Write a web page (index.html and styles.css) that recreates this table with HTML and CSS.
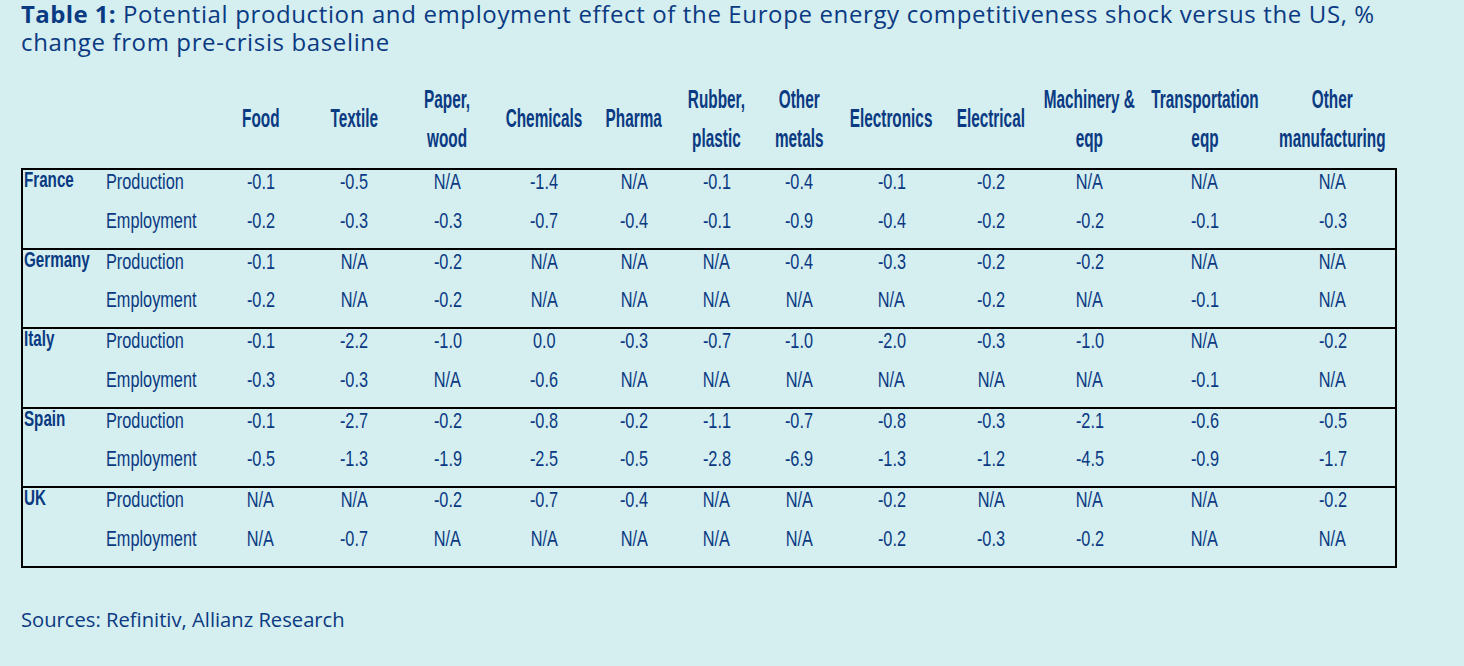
FILE: index.html
```html
<!DOCTYPE html>
<html lang="en">
<head>
<meta charset="utf-8">
<title>Table 1</title>
<link rel="stylesheet" href="styles.css">
</head>
<body>
<div class="page">
  <h1 class="title"><b>Table 1:</b> Potential production and employment effect of the Europe energy competitiveness shock versus the US, % change from pre-crisis baseline</h1>

  <div class="tbl">
    <div class="head">
      <div class="hc"></div>
      <div class="hc"></div>
      <div class="hc"><span class="h">Food</span></div>
      <div class="hc"><span class="h">Textile</span></div>
      <div class="hc"><span class="h">Paper,<br>wood</span></div>
      <div class="hc"><span class="h">Chemicals</span></div>
      <div class="hc"><span class="h">Pharma</span></div>
      <div class="hc"><span class="h">Rubber,<br>plastic</span></div>
      <div class="hc"><span class="h">Other<br>metals</span></div>
      <div class="hc"><span class="h">Electronics</span></div>
      <div class="hc"><span class="h">Electrical</span></div>
      <div class="hc"><span class="h">Machinery &amp;<br>eqp</span></div>
      <div class="hc"><span class="h">Transportation<br>eqp</span></div>
      <div class="hc"><span class="h">Other<br>manufacturing</span></div>
    </div>

    <div class="body">
      <div class="group">
        <div class="country"><span>France</span></div><div class="metric"><span>Production</span></div>
        <div class="v"><span>-0.1</span></div><div class="v"><span>-0.5</span></div><div class="v"><span>N/A</span></div><div class="v"><span>-1.4</span></div><div class="v"><span>N/A</span></div><div class="v"><span>-0.1</span></div><div class="v"><span>-0.4</span></div><div class="v"><span>-0.1</span></div><div class="v"><span>-0.2</span></div><div class="v"><span>N/A</span></div><div class="v"><span>N/A</span></div><div class="v"><span>N/A</span></div>
        <div class="country"></div><div class="metric"><span>Employment</span></div>
        <div class="v"><span>-0.2</span></div><div class="v"><span>-0.3</span></div><div class="v"><span>-0.3</span></div><div class="v"><span>-0.7</span></div><div class="v"><span>-0.4</span></div><div class="v"><span>-0.1</span></div><div class="v"><span>-0.9</span></div><div class="v"><span>-0.4</span></div><div class="v"><span>-0.2</span></div><div class="v"><span>-0.2</span></div><div class="v"><span>-0.1</span></div><div class="v"><span>-0.3</span></div>
      </div>

      <div class="group">
        <div class="country"><span>Germany</span></div><div class="metric"><span>Production</span></div>
        <div class="v"><span>-0.1</span></div><div class="v"><span>N/A</span></div><div class="v"><span>-0.2</span></div><div class="v"><span>N/A</span></div><div class="v"><span>N/A</span></div><div class="v"><span>N/A</span></div><div class="v"><span>-0.4</span></div><div class="v"><span>-0.3</span></div><div class="v"><span>-0.2</span></div><div class="v"><span>-0.2</span></div><div class="v"><span>N/A</span></div><div class="v"><span>N/A</span></div>
        <div class="country"></div><div class="metric"><span>Employment</span></div>
        <div class="v"><span>-0.2</span></div><div class="v"><span>N/A</span></div><div class="v"><span>-0.2</span></div><div class="v"><span>N/A</span></div><div class="v"><span>N/A</span></div><div class="v"><span>N/A</span></div><div class="v"><span>N/A</span></div><div class="v"><span>N/A</span></div><div class="v"><span>-0.2</span></div><div class="v"><span>N/A</span></div><div class="v"><span>-0.1</span></div><div class="v"><span>N/A</span></div>
      </div>

      <div class="group">
        <div class="country"><span>Italy</span></div><div class="metric"><span>Production</span></div>
        <div class="v"><span>-0.1</span></div><div class="v"><span>-2.2</span></div><div class="v"><span>-1.0</span></div><div class="v"><span>0.0</span></div><div class="v"><span>-0.3</span></div><div class="v"><span>-0.7</span></div><div class="v"><span>-1.0</span></div><div class="v"><span>-2.0</span></div><div class="v"><span>-0.3</span></div><div class="v"><span>-1.0</span></div><div class="v"><span>N/A</span></div><div class="v"><span>-0.2</span></div>
        <div class="country"></div><div class="metric"><span>Employment</span></div>
        <div class="v"><span>-0.3</span></div><div class="v"><span>-0.3</span></div><div class="v"><span>N/A</span></div><div class="v"><span>-0.6</span></div><div class="v"><span>N/A</span></div><div class="v"><span>N/A</span></div><div class="v"><span>N/A</span></div><div class="v"><span>N/A</span></div><div class="v"><span>N/A</span></div><div class="v"><span>N/A</span></div><div class="v"><span>-0.1</span></div><div class="v"><span>N/A</span></div>
      </div>

      <div class="group">
        <div class="country"><span>Spain</span></div><div class="metric"><span>Production</span></div>
        <div class="v"><span>-0.1</span></div><div class="v"><span>-2.7</span></div><div class="v"><span>-0.2</span></div><div class="v"><span>-0.8</span></div><div class="v"><span>-0.2</span></div><div class="v"><span>-1.1</span></div><div class="v"><span>-0.7</span></div><div class="v"><span>-0.8</span></div><div class="v"><span>-0.3</span></div><div class="v"><span>-2.1</span></div><div class="v"><span>-0.6</span></div><div class="v"><span>-0.5</span></div>
        <div class="country"></div><div class="metric"><span>Employment</span></div>
        <div class="v"><span>-0.5</span></div><div class="v"><span>-1.3</span></div><div class="v"><span>-1.9</span></div><div class="v"><span>-2.5</span></div><div class="v"><span>-0.5</span></div><div class="v"><span>-2.8</span></div><div class="v"><span>-6.9</span></div><div class="v"><span>-1.3</span></div><div class="v"><span>-1.2</span></div><div class="v"><span>-4.5</span></div><div class="v"><span>-0.9</span></div><div class="v"><span>-1.7</span></div>
      </div>

      <div class="group">
        <div class="country"><span>UK</span></div><div class="metric"><span>Production</span></div>
        <div class="v"><span>N/A</span></div><div class="v"><span>N/A</span></div><div class="v"><span>-0.2</span></div><div class="v"><span>-0.7</span></div><div class="v"><span>-0.4</span></div><div class="v"><span>N/A</span></div><div class="v"><span>N/A</span></div><div class="v"><span>-0.2</span></div><div class="v"><span>N/A</span></div><div class="v"><span>N/A</span></div><div class="v"><span>N/A</span></div><div class="v"><span>-0.2</span></div>
        <div class="country"></div><div class="metric"><span>Employment</span></div>
        <div class="v"><span>N/A</span></div><div class="v"><span>-0.7</span></div><div class="v"><span>N/A</span></div><div class="v"><span>N/A</span></div><div class="v"><span>N/A</span></div><div class="v"><span>N/A</span></div><div class="v"><span>N/A</span></div><div class="v"><span>-0.2</span></div><div class="v"><span>-0.3</span></div><div class="v"><span>-0.2</span></div><div class="v"><span>N/A</span></div><div class="v"><span>N/A</span></div>
      </div>
    </div>
  </div>

  <p class="sources">Sources: Refinitiv, Allianz Research</p>
</div>
</body>
</html>
```

FILE: styles.css
```css
html, body {
  margin: 0;
  padding: 0;
  background: #d5eef0;
}

.page {
  padding: 0 21px;
  color: #0a3a82;
  font-family: "Open Sans", "Liberation Sans", sans-serif;
}

.title {
  margin: 0;
  font-size: 24px;
  font-weight: 400;
  line-height: 28.4px;
  letter-spacing: 0.63px;
}

.title b {
  font-weight: 700;
  letter-spacing: 0.4px;
}

.tbl {
  margin-top: 22.7px;
  width: 1376px;
  font-family: "Liberation Sans", Arial, sans-serif;
}

.head,
.group {
  display: grid;
  grid-template-columns: 80px 109px 97px 90px 97px 96px 84px 81px 84px 101px 98px 99px 131px 125px;
}

.head {
  padding: 0 2px 10.5px 2px;
  min-height: 78px;
}

.hc {
  display: flex;
  justify-content: center;
  align-items: center;
  text-align: center;
  font-size: 26px;
  font-weight: 700;
  line-height: 39px;
  white-space: nowrap;
}

.h {
  display: block;
  flex: none;
  transform: scaleX(0.59);
}

.body {
  border-left: 2px solid #000;
  border-right: 2px solid #000;
  border-bottom: 2px solid #000;
}

.group {
  grid-auto-rows: 38.75px;
  border-top: 2px solid #000;
}

.country,
.metric,
.v {
  font-size: 22px;
  line-height: 24.6px;
  white-space: nowrap;
}

.country {
  font-weight: 700;
  padding-left: 1px;
}

.country span {
  display: inline-block;
  transform-origin: left center;
  transform: translateY(-2px) scaleX(0.69);
}

.metric {
  padding-left: 3px;
}

.metric span {
  display: inline-block;
  transform-origin: left center;
  transform: scaleX(0.74);
}

.v {
  display: flex;
  justify-content: center;
  align-items: flex-start;
}

.v span {
  display: block;
  flex: none;
  transform: scaleX(0.74);
}

.sources {
  margin: 38.8px 0 0 0;
  font-size: 20.2px;
  line-height: 26px;
}
```
